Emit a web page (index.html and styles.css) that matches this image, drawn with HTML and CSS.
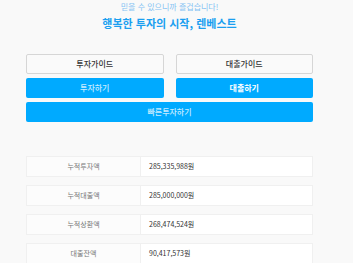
FILE: index.html
```html
<!DOCTYPE html>
<html lang="ko">
<head>
    <meta charset="UTF-8">
    <meta name="viewport" content="width=device-width, initial-scale=1.0">
    <title>렌베스트</title>
    <link rel="stylesheet" href="styles.css">
</head>
<body>
    <div class="header">
        <p class="sub">믿을 수 있으니까 즐겁습니다!</p>
        <h1>행복한 투자의 시작, 렌베스트</h1>
    </div>

    <div class="buttons">
        <a class="btn guide" href="#">투자가이드</a>
        <a class="btn guide" href="#">대출가이드</a>
        <a class="btn blue" href="#">투자하기</a>
        <a class="btn blue strong" href="#">대출하기</a>
        <a class="btn blue wide" href="#">빠른투자하기</a>
    </div>

    <div class="stats">
        <div class="row"><div class="label">누적투자액</div><div class="value">285,335,988원</div></div>
        <div class="row"><div class="label">누적대출액</div><div class="value">285,000,000원</div></div>
        <div class="row"><div class="label">누적상환액</div><div class="value">268,474,524원</div></div>
        <div class="row"><div class="label">대출잔액</div><div class="value">90,417,573원</div></div>
    </div>
</body>
</html>
```

FILE: styles.css
```css
body {
    background-color: #f9f9f9;
    font-family: "Noto Sans CJK KR", "Noto Sans", sans-serif;
    margin: 0;
    padding: 0 40px 0 26px;
}
.header {
    text-align: center;
    padding-top: 1px;
}
.header .sub {
    margin: 0;
    font-size: 8px;
    line-height: 12px;
    color: #84c3f3;
}
.header h1 {
    margin: 2px 0 0;
    font-size: 11px;
    line-height: 16px;
    color: #1b9ff0;
    font-weight: bold;
}
.buttons {
    display: grid;
    grid-template-columns: 1fr 1fr;
    column-gap: 12px;
    row-gap: 4px;
    margin-top: 23px;
}
.btn {
    display: block;
    height: 20px;
    line-height: 20px;
    text-align: center;
    font-size: 8px;
    font-weight: 500;
    text-decoration: none;
    border-radius: 2px;
    box-sizing: border-box;
}
.guide {
    background-color: #fafafa;
    border: 1px solid #d6d6d6;
    color: #333;
    line-height: 18px;
}
.blue {
    background-color: #00aaff;
    color: #c9ecff;
}
.strong {
    color: #ffffff;
    font-weight: bold;
}
.wide {
    grid-column: 1 / 3;
}
.stats {
    margin-top: 34px;
}
.row {
    display: flex;
    height: 21px;
    margin-bottom: 8px;
    font-size: 7px;
}
.label {
    width: 115px;
    text-align: center;
    background-color: #fcfcfc;
    border: 1px solid #f0f0f0;
    color: #777;
    line-height: 19px;
    box-sizing: border-box;
}
.value {
    flex: 1;
    background-color: #ffffff;
    border: 1px solid #f0f0f0;
    border-left: none;
    padding-left: 8px;
    color: #333;
    line-height: 19px;
    box-sizing: border-box;
}
```
